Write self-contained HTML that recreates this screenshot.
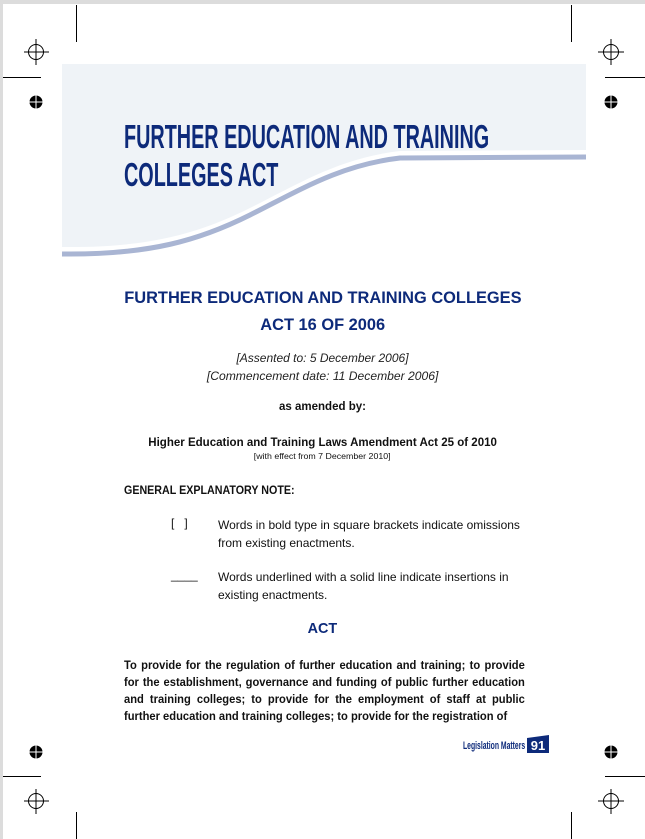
<!DOCTYPE html>
<html><head><meta charset="utf-8"><style>
*{margin:0;padding:0;box-sizing:border-box}
body{width:645px;height:839px;background:#fff;position:relative;overflow:hidden;font-family:"Liberation Sans",sans-serif;color:#111}
.a{position:absolute;white-space:nowrap}
.c{position:absolute;left:0;width:645px;text-align:center;white-space:nowrap}
.sx{display:inline-block;transform:scaleX(0.96);transform-origin:center}
.blue{color:#0d2a7a}
</style></head><body>
<div style="position:absolute;left:0;top:0;width:645px;height:4px;background:#dcdcdc"></div>
<div style="position:absolute;left:0;top:0;width:3px;height:839px;background:#dcdcdc"></div>
<svg class="a" style="left:0;top:0" width="645" height="839">
<g stroke="#000" stroke-width="1" fill="none">
<line x1="76.5" y1="5" x2="76.5" y2="42"/><line x1="571.5" y1="5" x2="571.5" y2="42"/>
<line x1="3" y1="77.5" x2="41" y2="77.5"/><line x1="605" y1="77.5" x2="645" y2="77.5"/>
<line x1="76.5" y1="812" x2="76.5" y2="839"/><line x1="571.5" y1="812" x2="571.5" y2="839"/>
<line x1="3" y1="776.5" x2="41" y2="776.5"/><line x1="605" y1="776.5" x2="645" y2="776.5"/>
<circle cx="36" cy="52" r="7.5"/><line x1="24" y1="52" x2="49" y2="52"/><line x1="36" y1="39" x2="36" y2="65"/>
<circle cx="611" cy="52" r="7.5"/><line x1="598" y1="52" x2="624" y2="52"/><line x1="611" y1="39" x2="611" y2="65"/>
<circle cx="36" cy="801" r="7.5"/><line x1="24" y1="801" x2="49" y2="801"/><line x1="36" y1="789" x2="36" y2="814"/>
<circle cx="611" cy="801" r="7.5"/><line x1="598" y1="801" x2="624" y2="801"/><line x1="611" y1="789" x2="611" y2="814"/>
</g>
<g>
<circle cx="36" cy="102" r="6.5" fill="#000"/><line x1="29" y1="102" x2="43" y2="102" stroke="#fff"/><line x1="36" y1="95" x2="36" y2="109" stroke="#fff"/>
<circle cx="611" cy="102" r="6.5" fill="#000"/><line x1="604" y1="102" x2="618" y2="102" stroke="#fff"/><line x1="611" y1="95" x2="611" y2="109" stroke="#fff"/>
<circle cx="36" cy="752" r="6.5" fill="#000"/><line x1="29" y1="752" x2="43" y2="752" stroke="#fff"/><line x1="36" y1="745" x2="36" y2="759" stroke="#fff"/>
<circle cx="611" cy="752" r="6.5" fill="#000"/><line x1="604" y1="752" x2="618" y2="752" stroke="#fff"/><line x1="611" y1="745" x2="611" y2="759" stroke="#fff"/>
</g>
<path d="M62 64 H586 V150 L400 151 C340 158 300 183 250 208 C200 233 150 248 62 247 Z" fill="#eff3f7"/>
<path d="M586 157 L400 158 C340 165 300 190 250 215 C200 240 150 255 62 254" fill="none" stroke="#a9b5d3" stroke-width="5"/>
</svg>
<div class="a blue" style="left:124px;top:118px;font-size:33px;font-weight:bold;line-height:38px;transform:scaleX(0.6);transform-origin:left top;font-family:'Liberation Sans Narrow','Liberation Sans',sans-serif">FURTHER EDUCATION AND TRAINING<br>COLLEGES ACT</div>
<div class="c blue" style="top:284px;font-size:17px;font-weight:bold;line-height:27px"><span class="sx" style="transform:scaleX(0.965)">FURTHER EDUCATION AND TRAINING COLLEGES</span><br><span class="sx" style="transform:scaleX(0.965)">ACT 16 OF 2006</span></div>
<div class="c" style="top:349px;font-size:12px;font-style:italic;line-height:18px;color:#222"><span class="sx" style="transform:scaleX(1.0)">[Assented to: 5 December 2006]</span><br><span class="sx" style="transform:scaleX(1.01)">[Commencement date: 11 December 2006]</span></div>
<div class="c" style="top:401px;font-size:11.5px;font-weight:bold"><span class="sx" style="transform:scaleX(1.0)">as amended by:</span></div>
<div class="c" style="top:435px;font-size:12px;font-weight:bold"><span class="sx">Higher Education and Training Laws Amendment Act 25 of 2010</span></div>
<div class="c" style="top:452px;font-size:8px"><span class="sx" style="transform:scaleX(1.1)">[with effect from 7 December 2010]</span></div>
<div class="a" style="left:124px;top:485px;font-size:11.5px;font-weight:bold;transform:scaleX(0.93);transform-origin:left">GENERAL EXPLANATORY NOTE:</div>
<div class="a" style="left:171px;top:516px;font-size:12px">[&nbsp;&nbsp;&nbsp;]</div>
<div class="a" style="left:218px;top:516px;font-size:12px;line-height:18px;transform:scaleX(1.0);transform-origin:left">Words in bold type in square brackets indicate omissions<br>from existing enactments.</div>
<div class="a" style="left:171px;top:568px;font-size:12px">____</div>
<div class="a" style="left:218px;top:568px;font-size:12px;line-height:18px;transform:scaleX(1.0);transform-origin:left">Words underlined with a solid line indicate insertions in<br>existing enactments.</div>
<div class="c blue" style="top:620px;font-size:15px;font-weight:bold"><span class="sx">ACT</span></div>
<div class="a" style="left:124px;top:657px;width:431px;white-space:normal;font-size:12px;font-weight:bold;line-height:17px;text-align:justify;transform:scaleX(0.93);transform-origin:left top">To provide for the regulation of further education and training; to provide for the establishment, governance and funding of public further education and training colleges; to provide for the employment of staff at public further education and training colleges; to provide for the registration of</div>
<div class="a blue" style="left:463px;top:740px;font-size:11px;font-weight:bold;transform:scaleX(0.62);transform-origin:left top">Legislation Matters</div>
<svg class="a" style="left:527px;top:735px" width="22" height="18"><path d="M0 3 L22 0 V18 H0 Z" fill="#0d2a7a"/><text x="11" y="15" fill="#fff" font-size="13" font-weight="bold" text-anchor="middle" font-family="Liberation Sans Narrow,Liberation Sans,sans-serif">91</text></svg>
</body></html>
